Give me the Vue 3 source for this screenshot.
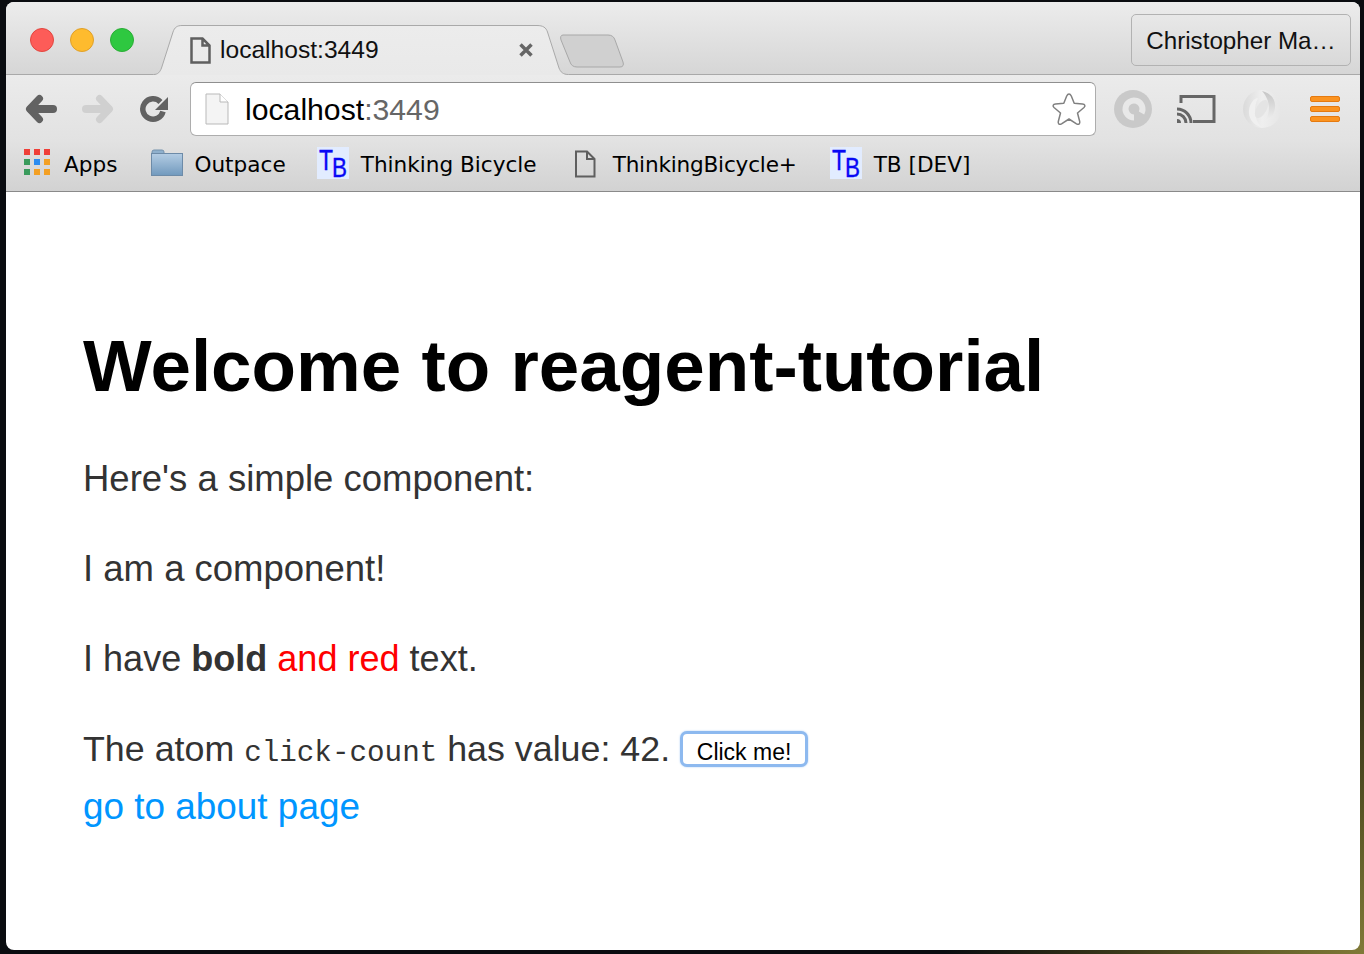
<template>
  <div class="desktop">
    <div class="window">
      <div class="tabstrip">
        <div class="lights">
          <span class="light red"></span>
          <span class="light yellow"></span>
          <span class="light green"></span>
        </div>
        <div class="tab">
          <svg class="tab-shape" width="416" height="50" viewBox="0 0 416 50">
            <defs>
              <linearGradient id="tabfill" x1="0" y1="0" x2="0" y2="1">
                <stop offset="0" stop-color="#ececec" />
                <stop offset="1" stop-color="#e9e9e9" />
              </linearGradient>
            </defs>
            <path d="M0.5 49.5 C5 49.5 7 47 8.5 43 L20 7 C21.5 2.5 24 0.5 29 0.5 L384 0.5 C390 0.5 393 2.5 394.5 7 L406 43 C407.5 47 410 49.5 415.5 49.5 L416 50 L0 50 Z" fill="url(#tabfill)" />
            <path d="M0.5 49.5 C5 49.5 7 47 8.5 43 L20 7 C21.5 2.5 24 0.5 29 0.5 L384 0.5 C390 0.5 393 2.5 394.5 7 L406 43 C407.5 47 410 49.5 415.5 49.5" fill="none" stroke="#a9a9a9" />
          </svg>
          <svg class="tab-doc" width="21" height="27" viewBox="0 0 21 27">
            <path d="M1.5 1.5 H12.5 L19.5 8.5 V25.5 H1.5 Z M12.5 1.5 V8.5 H19.5" fill="none" stroke="#5f5f5f" stroke-width="2.5" />
          </svg>
          <span class="tab-title">localhost:3449</span>
          <svg class="tab-close" width="14" height="14" viewBox="0 0 14 14">
            <path d="M1.5 1.5 L12.5 12.5 M12.5 1.5 L1.5 12.5" stroke="#666" stroke-width="3.5" />
          </svg>
        </div>
        <svg class="newtab" width="66" height="34" viewBox="0 0 66 34">
          <path d="M3 1 H48 C52 1 54 3 55 6 L63 28 C64 31 63 33 60 33 H17 C13 33 11 31 10 28 L1 6 C0 3 1 1 3 1 Z" fill="#d0d0d0" stroke="#a8a8a8" />
        </svg>
        <div class="spacer"></div>
        <div class="profile">Christopher Ma…</div>
      </div>

      <div class="toolbar">
        <svg class="nav back" width="34" height="30" viewBox="0 0 34 30">
          <path d="M14.5 4.5 L4.5 15 L14.5 25.5" fill="none" stroke="#626262" stroke-width="7" stroke-linecap="round" stroke-linejoin="round" />
          <path d="M6 15 H28" fill="none" stroke="#626262" stroke-width="8" stroke-linecap="round" />
        </svg>
        <svg class="nav forward" width="34" height="30" viewBox="0 0 34 30">
          <path d="M18.5 4.5 L28.5 15 L18.5 25.5" fill="none" stroke="#d0d0d0" stroke-width="7" stroke-linecap="round" stroke-linejoin="round" />
          <path d="M27 15 H5" fill="none" stroke="#d0d0d0" stroke-width="8" stroke-linecap="round" />
        </svg>
        <svg class="nav reload" width="30" height="30" viewBox="0 0 30 30">
          <path d="M21.5 8 A10.25 10.25 0 1 0 24 17.5" fill="none" stroke="#626262" stroke-width="5.5" />
          <path d="M16 16 L29 16 L29 3 Z" fill="#626262" />
        </svg>
        <div class="omnibox">
          <svg class="omni-doc" width="24" height="32" viewBox="0 0 24 32">
            <path d="M1 1 H15 L23 9 V31 H1 Z" fill="#f4f4f4" stroke="#b9b9b9" />
            <path d="M15 1 V9 H23" fill="#fff" stroke="#b9b9b9" />
          </svg>
          <span class="url">localhost<span class="port">:3449</span></span>
          <svg class="star" width="36" height="36" viewBox="0 0 36 36">
            <path d="M18 3 C19 3 19.8 4 20.3 5 L23.2 12.3 L31.5 13 C34 13.3 34.6 15 33 16.5 L26.5 22 L28.7 30.5 C29.3 33 27.5 34 25.5 32.8 L18 28 L10.5 32.8 C8.5 34 6.7 33 7.3 30.5 L9.5 22 L3 16.5 C1.4 15 2 13.3 4.5 13 L12.8 12.3 L15.7 5 C16.2 4 17 3 18 3 Z" fill="#fff" stroke="#808080" stroke-width="1.5" stroke-linejoin="round" />
          </svg>
        </div>
        <svg class="ext ext-a" width="38" height="38" viewBox="0 0 38 38">
          <circle cx="19" cy="19" r="19" fill="#c9c9c9" />
          <path d="M27.5 23 A8.5 8.5 0 1 0 20 27.5" fill="none" stroke="#e8e8e8" stroke-width="6" />
        </svg>
        <svg class="ext ext-cast" width="40" height="30" viewBox="0 0 40 30">
          <path d="M4 9 V2.5 H37 V27.5 H16" fill="none" stroke="#666" stroke-width="3" />
          <path d="M0 15 A14 14 0 0 1 14 29 M0 20 A9 9 0 0 1 9 29" fill="none" stroke="#666" stroke-width="3" />
          <path d="M0 25 A4 4 0 0 1 4 29 H0 Z" fill="#666" />
        </svg>
        <svg class="ext ext-swirl" width="38" height="38" viewBox="0 0 38 38">
          <defs>
            <linearGradient id="swirl" x1="0" y1="0" x2="1" y2="0">
              <stop offset="0" stop-color="#dadada" />
              <stop offset="0.5" stop-color="#efefef" />
              <stop offset="1" stop-color="#e6e6e6" />
            </linearGradient>
            <linearGradient id="swirldark" x1="0" y1="0" x2="0" y2="1">
              <stop offset="0" stop-color="#c6c6c6" />
              <stop offset="1" stop-color="#eeeeee" />
            </linearGradient>
          </defs>
          <circle cx="19" cy="19" r="19" fill="url(#swirl)" />
          <path d="M19 1 C28 3 33 10 32 18 C31 25 27 30 23 30 C27 22 28 11 19 1 Z" fill="url(#swirldark)" />
          <path d="M18 37 C10 35 5 28 6 20 C7 13 11 8 15 8 C11 16 10 27 18 37 Z" fill="#f0f0f0" />
          <ellipse cx="18.5" cy="19" rx="5" ry="10" transform="rotate(30 18.5 19)" fill="#e4e4e4" />
        </svg>
        <div class="menu">
          <span></span><span></span><span></span>
        </div>
      </div>

      <div class="bookmarks">
        <div class="bookmark apps">
          <div class="apps-grid">
            <i v-for="(c, i) in appColors" :key="i" :style="{ background: c }"></i>
          </div>
          <span>Apps</span>
        </div>
        <div class="bookmark outpace">
          <svg width="32" height="27" viewBox="0 0 32 27">
            <defs>
              <linearGradient id="folder" x1="0" y1="0" x2="0" y2="1">
                <stop offset="0" stop-color="#b4cde4" />
                <stop offset="1" stop-color="#7199bd" />
              </linearGradient>
            </defs>
            <path d="M1 3 Q1 1 3 1 H11 Q13 1 13 3 V5 H1 Z" fill="#8fb0cd" stroke="#7592ad" />
            <rect x="0.5" y="4.5" width="31" height="22" fill="url(#folder)" stroke="#6d8ba8" />
          </svg>
          <span>Outpace</span>
        </div>
        <div class="bookmark tb">
          <svg class="tb-logo" width="32" height="32" viewBox="0 0 32 32">
            <rect width="32" height="32" fill="#e2ecff" />
            <text x="2" y="23" class="tb-letter" font-size="29" textLength="14" lengthAdjust="spacingAndGlyphs">T</text>
            <text x="15" y="30" class="tb-letter" font-size="28" textLength="15" lengthAdjust="spacingAndGlyphs">B</text>
          </svg>
          <span>Thinking Bicycle</span>
        </div>
        <div class="bookmark plus">
          <svg width="22" height="28" viewBox="0 0 22 28">
            <path d="M2 1.5 H13 L20.5 9 V26.5 H2 Z M13 1.5 V9 H20.5" fill="none" stroke="#5f5f5f" stroke-width="2" />
          </svg>
          <span class="tight">ThinkingBicycle+</span>
        </div>
        <div class="bookmark tb">
          <svg class="tb-logo" width="32" height="32" viewBox="0 0 32 32">
            <rect width="32" height="32" fill="#e2ecff" />
            <text x="2" y="23" class="tb-letter" font-size="29" textLength="14" lengthAdjust="spacingAndGlyphs">T</text>
            <text x="15" y="30" class="tb-letter" font-size="28" textLength="15" lengthAdjust="spacingAndGlyphs">B</text>
          </svg>
          <span>TB [DEV]</span>
        </div>
      </div>

      <div class="page">
        <h1>Welcome to reagent-tutorial</h1>
        <p>Here's a simple component:</p>
        <p>I am a component!</p>
        <p class="styled">I have <strong>bold</strong> <span class="red-text">and red</span> text.</p>
        <p class="atom">The atom <code>click-count</code> has value: {{ count }}. <button class="click-btn" @click="count++">Click me!</button></p>
        <a class="about" href="#">go to about page</a>
      </div>
    </div>
  </div>
</template>

<script setup>
import { ref } from 'vue'

const count = ref(42)
const appColors = [
  '#ef3f38', '#ef3f38', '#ef3f38',
  '#3a9b5c', '#2c8cf0', '#f3a024',
  '#3a9b5c', '#f3a024', '#f3a024'
]
</script>

<style>
html, body { margin: 0; background: #0a0c10; }
</style>

<style scoped>
.desktop { width: 1364px; height: 954px; box-sizing: border-box; padding: 2px 4px 4px 6px; overflow: hidden; background: radial-gradient(circle 420px at 100% 100%, #807a38 0%, #5d5926 30%, #2c2a16 70%, #0a0c10 100%), #0a0c10; }
.window { height: 948px; display: flex; flex-direction: column; background: #fff; border-radius: 8px; overflow: hidden; font-family: "Liberation Sans", Arial, sans-serif; }

.tabstrip { height: 72px; flex: none; display: flex; align-items: flex-start; background: linear-gradient(#ececec, #d6d6d6); border-bottom: 1px solid #a9a9a9; }
.lights { display: flex; gap: 16px; padding: 26px 0 0 24px; width: 123px; }
.light { width: 24px; height: 24px; border-radius: 50%; box-sizing: border-box; }
.light.red { background: #fd5c58; border: 1px solid #e2463f; }
.light.yellow { background: #febb2e; border: 1px solid #e0a028; }
.light.green { background: #2ec840; border: 1px solid #2aad35; }

.tab { position: relative; width: 416px; height: 50px; margin-top: 23px; display: flex; align-items: center; z-index: 1; }
.tab-shape { position: absolute; left: 0; top: 0; }
.tab-doc { position: relative; margin-left: 37px; }
.tab-title { position: relative; margin-left: 9px; font-size: 24.6px; color: #111; }
.tab-close { position: relative; margin-left: 140px; }
.newtab { margin: 32px 0 0 -9px; flex: none; }
.spacer { flex: 1; }
.profile { width: 220px; height: 52px; box-sizing: border-box; margin: 12px 9px 0 0; padding-top: 2px; border: 1px solid #b2b2b2; border-radius: 5px; display: flex; align-items: center; justify-content: center; font-size: 24.2px; color: #111; white-space: nowrap; }

.toolbar { height: 66px; box-sizing: border-box; padding-top: 2px; flex: none; display: flex; align-items: center; background: linear-gradient(#ebebeb, #e2e2e2); }
.nav.back { margin-left: 19px; }
.nav.forward { margin-left: 22px; }
.nav.reload { margin-left: 24px; }
.omnibox { width: 906px; height: 54px; box-sizing: border-box; margin-left: 21px; border: 1px solid #adadad; border-top-color: #8f8f8f; border-radius: 6px; background: #fff; display: flex; align-items: center; padding: 0 8px 0 14px; }
.url { margin-left: 16px; padding-top: 2px; font-size: 30.2px; color: #000; flex: 1; }
.port { color: #666; }
.ext-a { margin-left: 18px; }
.ext-cast { margin-left: 25px; }
.ext-swirl { margin-left: 26px; }
.menu { margin-left: 29px; width: 30px; display: flex; flex-direction: column; gap: 4px; }
.menu span { height: 6px; border-radius: 2px; background: #fb9320; border: 1px solid #e57a10; box-sizing: border-box; }

.bookmarks { height: 51px; flex: none; box-sizing: border-box; display: flex; align-items: center; padding: 0 0 8px 18px; background: linear-gradient(#e2e2e2, #d2d2d2); border-bottom: 1px solid #8a8a8a; font-family: "DejaVu Sans", sans-serif; font-size: 21.6px; color: #000; }
.bookmark { display: flex; align-items: center; }
.bookmark span { padding-top: 4px; }
.bookmark .tight { letter-spacing: -0.2px; }
.apps-grid { display: grid; grid-template-columns: repeat(3, 6px); gap: 4px; margin-right: 14px; }
.apps-grid i { height: 6px; display: block; }
.outpace { margin-left: 34px; }
.outpace svg { margin-right: 11px; }
.tb { margin-left: 31px; }
.tb-logo { margin: 2px 12px 0 0; overflow: visible; }
.plus { margin-left: 37px; }
.plus svg { margin: 3px 17px 0 0; }
.plus + .tb { margin-left: 33px; }
.tb-letter { font-family: "Liberation Sans", sans-serif; fill: #0808f5; stroke: #0808f5; stroke-width: 0.4px; }

.page { flex: 1; padding: 128px 0 0 77px; color: #333; font-size: 36.5px; }
h1 { margin: 0 0 46px; font-size: 72.8px; line-height: 92px; font-weight: 700; color: #000; }
p { margin: 0 0 48px; line-height: 42px; }
.styled { font-size: 36.05px; }
.red-text { color: #f00; }
.atom { margin-bottom: 11px; font-size: 35.8px; white-space: nowrap; }
code { font-family: "Liberation Mono", monospace; font-size: 29.25px; }
.click-btn { width: 128px; height: 36px; padding: 5px 0 0; margin-left: 0; box-sizing: border-box; background: #fff; border: 3px solid #8db9ef; border-radius: 7px; box-shadow: 0 0 2px #a9cbf4; font-family: "Liberation Sans", sans-serif; font-size: 23px; color: #000; vertical-align: 1px; }
.about { color: #0096ff; text-decoration: none; line-height: 42px; font-size: 36.9px; }
</style>
